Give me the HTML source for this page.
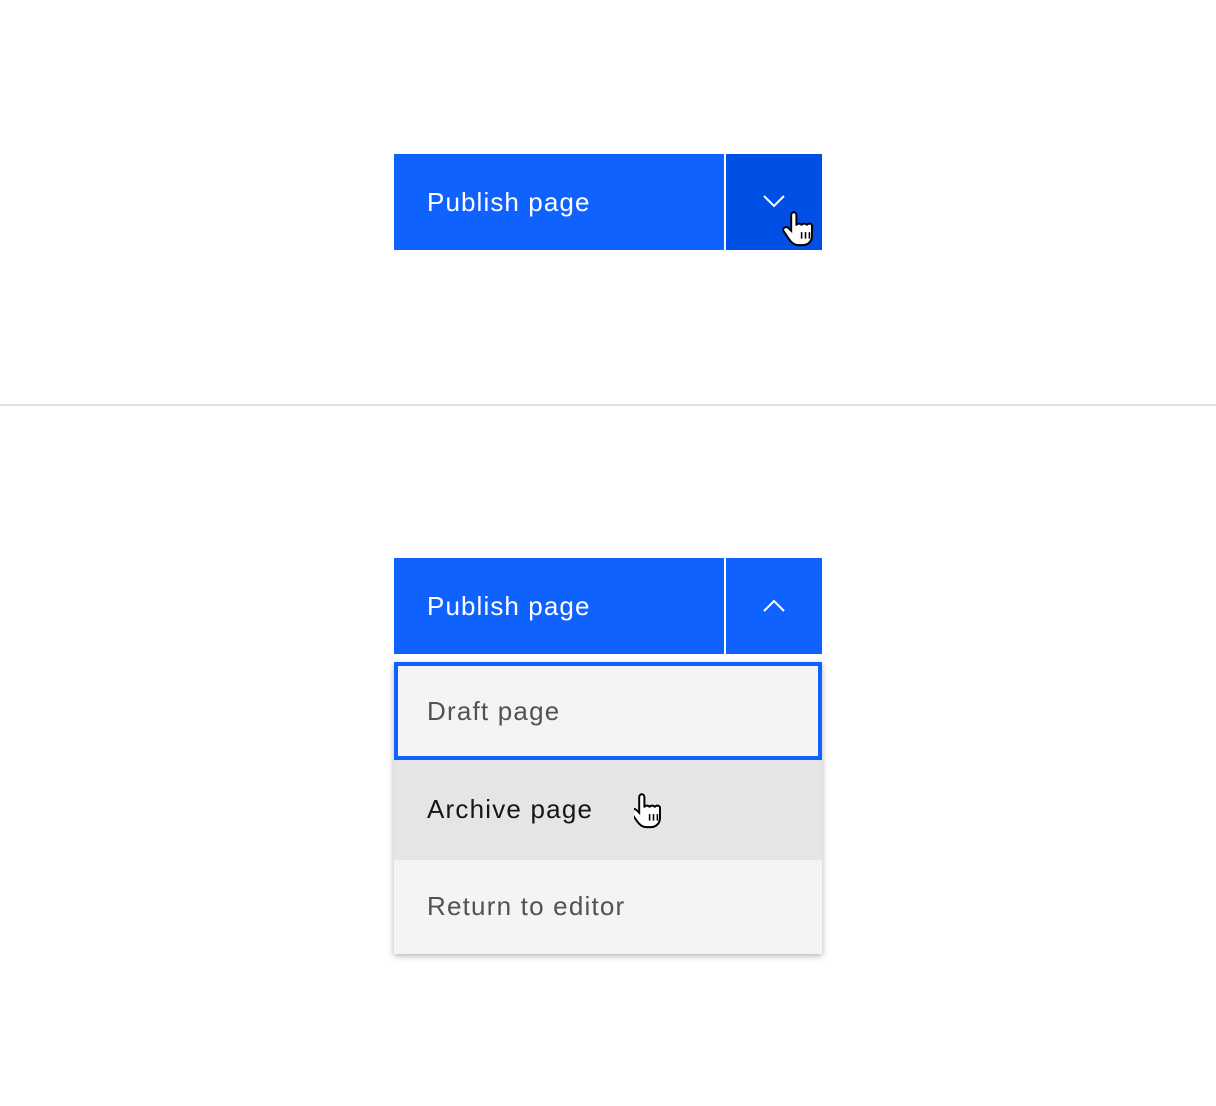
<!DOCTYPE html>
<html><head><style>
body{margin:0;width:1216px;height:1106px;background:#fff;position:relative;font-family:"Liberation Sans",sans-serif;overflow:hidden}
.a{position:absolute}
.btn{left:394px;width:330px;height:96px;background:#0f62fe;color:#fff;font-size:26px;letter-spacing:1.1px;line-height:96px;padding-left:33px;box-sizing:border-box}
.chev{left:726px;width:96px;height:96px;background:#0f62fe}
.it{left:394px;width:428px;font-size:26px;letter-spacing:1.2px;padding-left:33px;box-sizing:border-box}
</style></head><body>
<div class="a btn" style="top:154px">Publish page</div>
<div class="a chev" style="top:154px;background:#0050e6">
<svg width="96" height="96" style="position:absolute;left:0;top:0"><path d="M38 42 L48 52 L58 42" stroke="#fff" stroke-width="2" fill="none"/>
<g transform="translate(60,56) scale(1.3)"><path d="M4 4 c0-3 4-3 4 0 v8 c0-2 4-2 4 0 c0-2 4-2 4 0 c0-2 4-2 4 0 v8 c0 4-3 7-7 7 h-4 c-3 0-5-2-7-5 l-4-6 c-1-2 2-4 4-2 l2 2 z" fill="#fff" stroke="#000" stroke-width="1.5"/>
<path d="M12 17v5M15 17v5M18 17v5" stroke="#000" stroke-width="1.2"/></g></svg></div>
<div class="a" style="left:0;top:404px;width:1216px;height:2px;background:#e0e0e0"></div>
<div class="a btn" style="top:558px">Publish page</div>
<div class="a chev" style="top:558px">
<svg width="96" height="96" style="position:absolute;left:0;top:0"><path d="M38 53 L48 43 L58 53" stroke="#fff" stroke-width="2" fill="none"/></svg></div>
<div class="a" style="left:394px;top:662px;width:428px;height:292px;box-shadow:0 2px 6px rgba(0,0,0,.3)"></div>
<div class="a it" style="top:662px;height:98px;background:#f4f4f4;border:4px solid #0f62fe;padding-left:29px;line-height:90px;color:#525252">Draft page</div>
<div class="a it" style="top:760px;height:100px;background:#e5e5e5;line-height:98px;color:#161616">Archive page</div>
<svg class="a" style="left:634px;top:792px" width="40" height="40"><g transform="scale(1.3)"><path d="M4 4 c0-3 4-3 4 0 v8 c0-2 4-2 4 0 c0-2 4-2 4 0 c0-2 4-2 4 0 v8 c0 4-3 7-7 7 h-4 c-3 0-5-2-7-5 l-4-6 c-1-2 2-4 4-2 l2 2 z" fill="#fff" stroke="#000" stroke-width="1.5"/><path d="M12 17v5M15 17v5M18 17v5" stroke="#000" stroke-width="1.2"/></g></svg>
<div class="a it" style="top:860px;height:94px;background:#f4f4f4;line-height:92px;color:#525252">Return to editor</div>
</body></html>
